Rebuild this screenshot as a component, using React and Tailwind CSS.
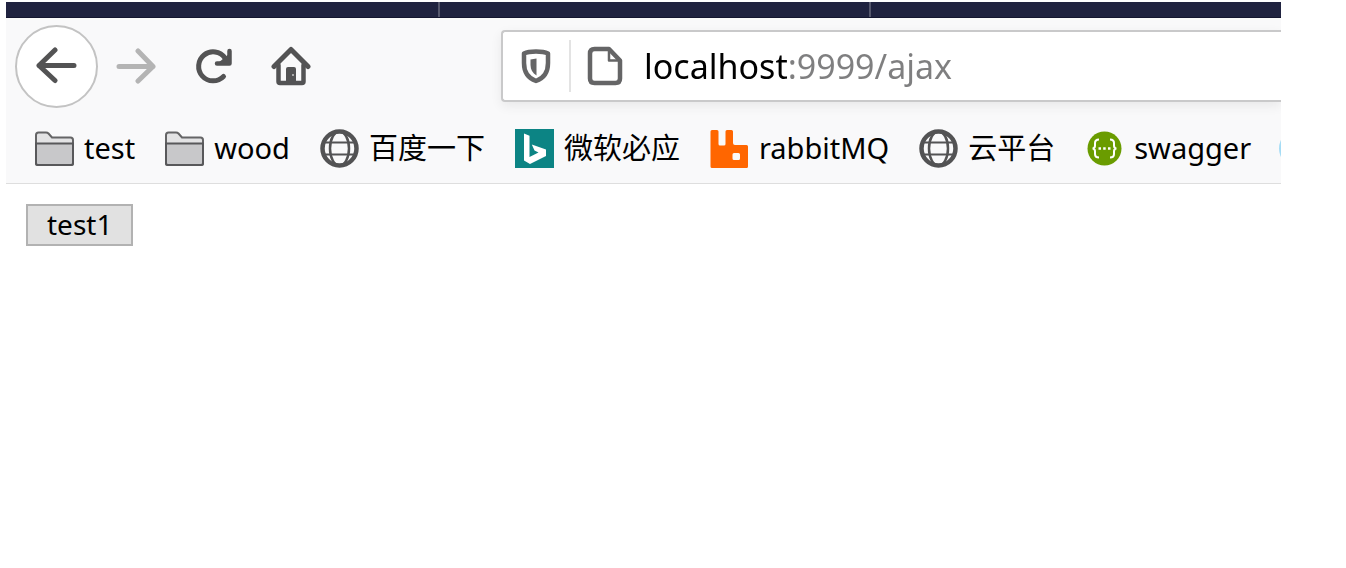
import React from "react";

const ink = "#535354";

function Back() {
  return (
    <svg width="42" height="38" viewBox="0 0 42 38" fill="none" stroke={ink} strokeWidth="5" strokeLinecap="round" strokeLinejoin="round" aria-hidden="true">
      <path d="M19 3 3 18.500l16 15M3 18.500h35" />
    </svg>
  );
}

function Forward() {
  return (
    <svg width="40" height="36" viewBox="0 0 40 36" fill="none" stroke="#b4b4b4" strokeWidth="5" strokeLinecap="round" strokeLinejoin="round" aria-hidden="true">
      <path d="M22 3 37 18.500 22 33M3 18.500h34" />
    </svg>
  );
}

function Reload() {
  return (
    <svg width="40" height="40" viewBox="0 0 40 40" fill="none" stroke={ink} strokeWidth="5" strokeLinecap="round" aria-hidden="true">
      <path d="M29.500 30.500A14.500 14.500 0 1 1 31 12" />
      <path d="M23 17.500h12.500V5" strokeWidth="4.500" strokeLinejoin="round" />
      <path d="M24 17 35 17V8z" fill={ink} stroke="none" />
    </svg>
  );
}

function Home() {
  return (
    <svg width="40" height="40" viewBox="0 0 40 40" fill="none" stroke={ink} strokeWidth="4.500" strokeLinecap="round" strokeLinejoin="round" aria-hidden="true">
      <path d="M3 20.500 20 3.500l17 17" strokeWidth="5" />
      <path d="M7.500 19v16.500q0 1.500 1.500 1.500h22q1.500 0 1.500-1.500V19" />
      <path d="M15 37V23q0-2 2-2h6q2 0 2 2v14z" fill={ink} stroke="none" />
      <rect x="21" y="28" width="2" height="2" fill="#aaa" stroke="none" />
    </svg>
  );
}

function Shield() {
  return (
    <svg width="32" height="36" viewBox="0 0 32 36" aria-hidden="true">
      <path d="M16 3.500 C20 3.500 25 4 28 5.500 V15 C28 24 24.500 30 16 33 C7.500 30 4 24 4 15 V5.500 C7 4 12 3.500 16 3.500Z" fill="none" stroke="#656566" strokeWidth="4.500" strokeLinejoin="round" />
      <path d="M16.500 10.500 10.500 11.500v5.500c0 4.500 2 8 6 10.500z" fill="#656566" />
    </svg>
  );
}

function Page() {
  return (
    <svg width="36" height="40" viewBox="0 0 36 40" fill="none" stroke="#656566" strokeWidth="4.500" strokeLinejoin="round" aria-hidden="true">
      <path d="M7.500 3H22l11 11.500V32.500q0 4.500-4.500 4.500H7.500Q3 37 3 32.500V7.500Q3 3 7.500 3z" />
      <path d="M22 4v10.500h10" strokeWidth="2.500" />
    </svg>
  );
}

function Folder() {
  return (
    <svg width="39" height="36" viewBox="0 0 39 36" aria-hidden="true">
      <path d="M1 32.500V4q0-2.500 2.500-2.500H11q1.500 0 2.500 1L17 6.500h18.500q2.500 0 2.500 2.500v23.500q0 1.500-1.500 1.500h-34Q1 34 1 32.500z" fill="#e3e3e4" stroke="#656566" strokeWidth="2" />
      <path d="M1 12.500h37v19.500q0 2-2 2H3q-2 0-2-2z" fill="#c8c8ca" stroke="#58585a" strokeWidth="2" />
    </svg>
  );
}

function Globe() {
  return (
    <svg width="39" height="39" viewBox="0 0 39 39" fill="none" stroke={ink} aria-hidden="true">
      <circle cx="19.500" cy="19.500" r="17" strokeWidth="4.500" />
      <ellipse cx="19.500" cy="19.500" rx="9.500" ry="17" strokeWidth="2.500" />
      <path d="M3 13.500h33M3 25.500h33" strokeWidth="2" />
    </svg>
  );
}

function Bing() {
  return (
    <svg width="39" height="39" viewBox="0 0 39 39" aria-hidden="true">
      <path d="M0 0h39v39H0z" fill="#0c8484" />
      <path d="M9 4.500 14.500 6.800V28L23.500 23.500 19.500 21.500 16.800 15.500 31 20.500V27L15 35 9 31.500z" fill="#fff" />
    </svg>
  );
}

function Rabbit() {
  return (
    <svg width="39" height="39" viewBox="0 0 39 39" aria-hidden="true">
      <path fillRule="evenodd" d="M2 1h5q1.500 0 1.500 1.500V15q0 1.500 1.500 1.500h4q1.500 0 1.500-1.500V2.500Q15.500 1 17 1h4.500Q23 1 23 2.500V14q0 2 2 2h11.500q1.500 0 1.500 1.500v20q0 1.500-1.500 1.500H2Q.5 39 .5 37.500v-35Q.5 1 2 1zM24 24q-1.500 0-1.500 1.500v4q0 1.500 1.500 1.500h4.500q1.500 0 1.500-1.500v-4q0-1.500-1.500-1.500z" fill="#ff6600" />
    </svg>
  );
}

function Swagger() {
  return (
    <svg width="39" height="39" viewBox="0 0 39 39" fill="none" stroke="#fff" strokeWidth="2" aria-hidden="true">
      <circle cx="19.500" cy="19.500" r="17" fill="#6a9c00" stroke="none" />
      <path d="M14 10.500q-4 0-4 3.500v2.500q0 3-2.500 3 2.500 0 2.500 3V25q0 3.500 4 3.500M25 10.500q4 0 4 3.500v2.500q0 3 2.500 3-2.500 0-2.500 3V25q0 3.500-4 3.500" />
      <path d="M13.500 19.500h2.500M18.200 19.500h2.500M23 19.500h2.500" strokeWidth="2.500" />
    </svg>
  );
}

function Dot() {
  return (
    <svg width="39" height="39" viewBox="0 0 39 39" aria-hidden="true">
      <circle cx="19.500" cy="19.500" r="19.500" fill="#a5dcf5" />
    </svg>
  );
}

const bookmarks = [
  ["test", Folder],
  ["wood", Folder],
  ["百度一下", Globe],
  ["微软必应", Bing],
  ["rabbitMQ", Rabbit],
  ["云平台", Globe],
  ["swagger", Swagger],
];

export default function App() {
  return (
    <div className="min-h-screen bg-white pt-0.5 pl-1.5 pr-[65px] font-['Noto_Sans','Noto_Sans_CJK_SC',sans-serif] text-black">
      <header className="overflow-hidden border-b border-[#dedede] bg-[#f9f9fa]">
        <div className="flex h-4 border-b border-[#14162f] bg-[#202340]">
          <div className="w-[434px] border-r-2 border-[#55576d]" />
          <div className="w-[431px] border-r-2 border-[#55576d]" />
        </div>
        <div className="flex h-24 items-center">
          <nav className="flex shrink-0 items-center pl-[9px]" aria-label="Navigation">
            <button type="button" aria-label="Back" className="flex size-[83px] items-center justify-center rounded-full border-2 border-[#c3c3c3] bg-white">
              <Back />
            </button>
            <button type="button" aria-label="Forward" className="ml-4 flex w-11 justify-center">
              <Forward />
            </button>
            <button type="button" aria-label="Reload" className="ml-9 flex w-10 justify-center">
              <Reload />
            </button>
            <button type="button" aria-label="Home" className="ml-[37px] flex w-10 justify-center">
              <Home />
            </button>
          </nav>
          <div className="ml-[190px] flex h-[72px] min-w-0 grow items-center rounded-l border-2 border-r-0 border-[#c9c9ca] bg-white pl-[17px] shadow-[0_4px_12px_rgba(0,0,0,0.07)]">
            <button type="button" aria-label="Tracking protection" className="shrink-0"><Shield /></button>
            <div className="ml-[17px] h-[52px] w-0.5 shrink-0 bg-[#e3e3e3]" />
            <button type="button" aria-label="Site information" className="ml-4 shrink-0"><Page /></button>
            <input
              aria-label="Address"
              defaultValue="localhost:9999/ajax"
              spellCheck={false}
              className="ml-[21px] h-14 min-w-0 grow bg-linear-to-r from-black from-[143px] to-[#7f7f80] to-[143px] bg-clip-text text-[34px] text-transparent caret-black outline-none"
            />
          </div>
        </div>
        <nav className="flex h-[69px] items-center gap-[30px] pl-[29px] text-[29px] leading-10 whitespace-nowrap" aria-label="Bookmarks">
          {bookmarks.map(([label, Icon]) => (
            <a key={label} href="#" className="flex shrink-0 items-center gap-[10px]">
              <Icon />
              <span className="pb-0.5">{label}</span>
            </a>
          ))}
          <a href="#" aria-label="More bookmarks" className="-ml-0.5 shrink-0">
            <Dot />
          </a>
        </nav>
      </header>
      <main className="px-5 py-5">
        <button type="button" className="flex h-[42px] items-center border-2 border-[#b2b2b2] bg-[#e1e1e1] px-[19px] pb-0.5 text-[28px] leading-none">test1</button>
      </main>
    </div>
  );
}
